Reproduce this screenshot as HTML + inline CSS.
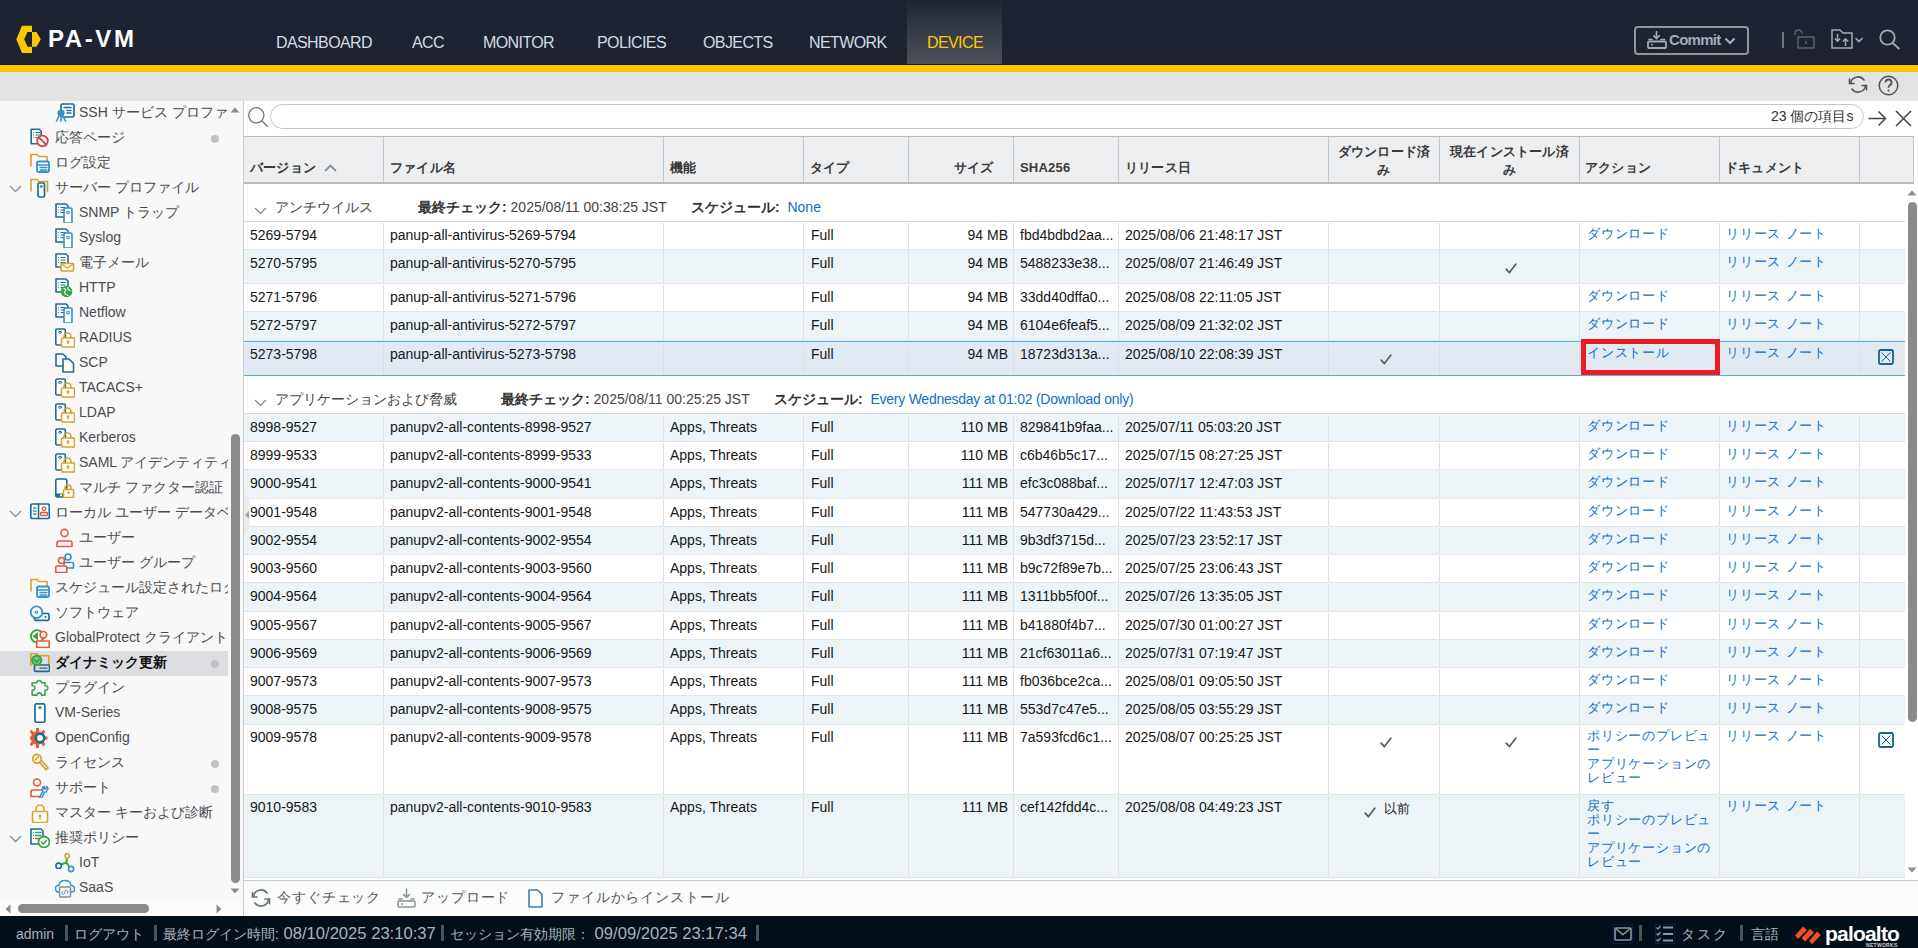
<!DOCTYPE html>
<html><head><meta charset="utf-8"><style>
*{box-sizing:border-box;margin:0;padding:0}
html,body{width:1918px;height:948px;overflow:hidden;background:#fff;font-family:"Liberation Sans",sans-serif;color:#222}
.abs{position:absolute}
#hdr{position:absolute;left:0;top:0;width:1918px;height:64px;background:#1d2330}
#hline{position:absolute;left:0;top:64px;width:1918px;height:1px;background:#0d1628}
#yel{position:absolute;left:0;top:65px;width:1918px;height:7px;background:#fdc800}
#tbar{position:absolute;left:0;top:72px;width:1918px;height:29px;background:#e2e3e5}
.nav{position:absolute;top:33px;font-size:16px;color:#d3dbe4;line-height:20px;letter-spacing:-0.6px;white-space:nowrap}
#devtab{position:absolute;left:907px;top:0;width:95px;height:64px;background:linear-gradient(#1f2531,#4b525d)}
#side{position:absolute;left:0;top:101px;width:244px;height:815px;background:#f8f8f8;border-right:1px solid #c9cbcd;overflow:hidden}
#sidelist{position:absolute;left:0;top:0;width:228px;height:800px;overflow:hidden}
.si{position:absolute;height:25px;left:0;width:228px;font-size:14px;line-height:24px;color:#474c52;white-space:nowrap;overflow:hidden}
.si.sel{background:#dcdde0;font-weight:bold;color:#111}
.si .t{position:absolute;top:-1px;margin-left:-1px}
.dot{position:absolute;left:211px;width:8px;height:8px;border-radius:50%;background:#c2c2c2}
#foot{position:absolute;left:0;top:916px;width:1918px;height:32px;background:#030f18;color:#a9b3bd;font-size:14px;white-space:nowrap}
#main{position:absolute;left:244px;top:101px;width:1674px;height:815px;background:#fff;overflow:hidden}
.row{position:absolute;left:0;width:1661px;border-bottom:1px solid #e3e6e8;font-size:14px;color:#161616;white-space:nowrap}
.row.sel{border-top:1px solid #5aaee0;border-bottom:1px solid #5aaee0;background:linear-gradient(#dfebf4,#e3e8f2)!important}
.vl{position:absolute;top:1px;bottom:0;width:1px;background:#dedfe1}
.c{position:absolute;top:3px;line-height:18px}
.c.r{left:auto}
.lk,.act{color:#0f6fc6}
.act{position:absolute;top:4px;line-height:14px;font-size:13px;letter-spacing:.8px}
.chk{position:absolute;top:12px;line-height:0}
.xb{position:absolute;top:7px;line-height:0}
#thead{position:absolute;left:0;top:35px;width:1670px;height:48px;background:#eceeef;border-top:1px solid #b9bdc1;border-bottom:2px solid #b9bdc1}
.th{position:absolute;top:23px;font-size:13px;font-weight:bold;color:#3a3a3a;letter-spacing:0.2px;line-height:16px;white-space:nowrap}
.th2{position:absolute;top:6px;font-size:13px;font-weight:bold;color:#3a3a3a;letter-spacing:0.2px;line-height:18px;text-align:center;white-space:nowrap}
.grp{position:absolute;left:0;width:1661px;background:#fff;border-bottom:1px solid #d6d9dc}
.gt{position:absolute;top:14px;font-size:14px;color:#444;line-height:18px;white-space:nowrap}
.gt b{color:#333}
.hvl{position:absolute;top:0;bottom:0;width:1px;background:#c4c8cc}
.bt{position:absolute;top:786px;font-size:14px;color:#555;letter-spacing:0.9px;line-height:20px;white-space:nowrap}
.ft{position:absolute;top:9px;line-height:18px}
.fb{position:absolute;top:9px;width:3px;height:16px;background:#4a525b}
.fd{font-size:16.6px}
.in{position:absolute;left:0;right:0;height:0}

</style></head><body>
<div id="hdr">
  <div id="devtab"></div>
  <svg class="abs" style="left:16px;top:25px" width="26" height="29" viewBox="0 0 26 29"><polygon points="16,0.8 6,0.8 0.3,14.2 6,27.9 16,27.9 16,21.7 11.5,21.7 8.2,14.2 11.5,7 16,7" fill="#fdc800"/><polygon points="16,7 20.5,7 24.8,14.2 20.5,21.7 16,21.7" fill="#fdc800"/></svg>
  <div class="abs" style="left:48px;top:26px;font-size:24px;font-weight:bold;color:#fff;letter-spacing:2.6px;line-height:26px">PA-VM</div>
  <div class="nav" style="left:276px">DASHBOARD</div>
  <div class="nav" style="left:412px">ACC</div>
  <div class="nav" style="left:483px">MONITOR</div>
  <div class="nav" style="left:597px">POLICIES</div>
  <div class="nav" style="left:703px">OBJECTS</div>
  <div class="nav" style="left:809px">NETWORK</div>
  <div class="nav" style="left:927px;color:#fdc800">DEVICE</div>
  <div class="abs" style="left:1634px;top:26px;width:115px;height:29px;border:2px solid #8e969f;border-radius:4px"></div>
  <svg class="abs" style="left:1647px;top:31px" width="20" height="18" viewBox="0 0 20 18" fill="none" stroke="#a3abb4" stroke-linecap="round"><path d="M9.5 0.8v6.5M6.8 4.8l2.7 2.7 2.7-2.7" stroke-width="1.7"/><path d="M2 8.5h3M14 8.5h3.5" stroke-width="1.7"/><rect x="1" y="10.5" width="18" height="6.5" rx="1" stroke-width="1.8"/><circle cx="5" cy="13.8" r="1" fill="#a3abb4" stroke="none"/></svg>
  <div class="abs" style="left:1669px;top:31px;font-size:15px;font-weight:bold;color:#a3abb4;line-height:18px;letter-spacing:-0.7px">Commit</div>
  <svg class="abs" style="left:1724px;top:37px" width="12" height="8" viewBox="0 0 12 8"><path d="M1.5 1.5l4.5 4.5 4.5-4.5" stroke="#a3abb4" stroke-width="2.2" fill="none"/></svg>
  <div class="abs" style="left:1782px;top:32px;width:2px;height:16px;background:#6b737c"></div>
  <svg class="abs" style="left:1794px;top:29px" width="22" height="20" viewBox="0 0 22 20" fill="none" stroke="#5e666f" stroke-width="1.4"><path d="M1 6V4.5a3.5 3.5 0 0 1 7 0"/><rect x="4" y="8" width="16" height="11"/><path d="M12 12v3"/></svg>
  <svg class="abs" style="left:1831px;top:29px" width="34" height="20" viewBox="0 0 34 20" fill="none" stroke="#a3abb4" stroke-width="1.5"><path d="M1 1h8l3 3h9v15h-20z"/><path d="M6.5 5v7M3.8 9.5l2.7 2.7 2.7-2.7M14.5 17v-7M11.8 12.5l2.7-2.7 2.7 2.7"/><path d="M24.5 9l3.5 3.5 3.5-3.5" stroke-width="1.6"/></svg>
  <svg class="abs" style="left:1879px;top:29px" width="22" height="21" viewBox="0 0 22 21" fill="none" stroke="#a3abb4" stroke-width="1.8"><circle cx="8.5" cy="8.5" r="7.2"/><path d="M13.8 14l6.5 6"/></svg>
</div>
<div id="hline"></div>
<div id="yel"></div>
<div id="tbar">
  <svg class="abs" style="left:1848px;top:3px" width="20" height="19" viewBox="0 0 20 19" fill="none" stroke="#555" stroke-width="1.6" stroke-linecap="round"><path d="M2.5 8.5a7.5 7.5 0 0 1 13.5-3.5"/><path d="M17.5 10.5a7.5 7.5 0 0 1-13.5 3.5"/><path d="M1.5 4v4.5h4.5" /><path d="M18.5 15v-4.5h-4.5"/></svg>
  <svg class="abs" style="left:1878px;top:3px" width="22" height="21" viewBox="0 0 22 21" fill="none" stroke="#555"><circle cx="10.5" cy="10.5" r="9.3" stroke-width="1.5"/><path d="M7.5 7.5a3 3 0 1 1 4 2.8c-1 .5-1 1-1 2.5" stroke-width="1.9"/><circle cx="10.5" cy="15.5" r="1.1" fill="#555" stroke="none"/></svg>
</div>
<div id="side"><div id="sidelist">
<div class="si" style="top:0px"><div class="abs" style="left:55px;top:2px;line-height:0"><svg width="20" height="20" viewBox="0 0 20 20" fill="none" stroke-linejoin="round" stroke-linecap="round"><rect x="6" y="1" width="13" height="13" rx="1.5" stroke="#1e6b99" stroke-width="1.7" fill="#fff"/><path d="M9 4.5h7M12 7.5h4M12 10h4" stroke="#1e6b99" stroke-width="1.3"/><circle cx="6" cy="10" r="3.6" fill="#2f93cc"/><path d="M4 13l-2.5 5M6 13.5v4.5M8 13l2.5 5" stroke="#2f93cc" stroke-width="1.6"/></svg></div><div class="t" style="left:80px">SSH サービス プロファイル</div></div>
<div class="si" style="top:25px"><div class="abs" style="left:30px;top:2px;line-height:0"><svg width="20" height="20" viewBox="0 0 20 20" fill="none" stroke-linejoin="round" stroke-linecap="round"><path d="M1.2 1.2h8l2 2v12.5h-10z" stroke="#1e6b99" stroke-width="1.6" fill="#fff"/><path d="M5.5 4.5h5M5.5 7h5M5.5 9.5h5M3 4.5h.8M3 7h.8M3 9.5h.8" stroke="#1e6b99" stroke-width="1.2" stroke-linecap="butt"/><circle cx="12.5" cy="13" r="5.3" stroke="#cf4646" stroke-width="1.8" fill="#fff"/><path d="M9 9.5l7 7" stroke="#cf4646" stroke-width="1.8"/></svg></div><div class="t" style="left:56px">応答ページ</div></div><div class="dot" style="top:34px"></div>
<div class="si" style="top:50px"><div class="abs" style="left:30px;top:2px;line-height:0"><svg width="20" height="20" viewBox="0 0 20 20" fill="none" stroke-linejoin="round" stroke-linecap="round"><path d="M1 13V1.5h6l2 2h8v5" stroke="#d9a22b" stroke-width="1.6"/><rect x="7" y="8.5" width="12" height="10.5" rx="1.5" stroke="#2f93cc" stroke-width="1.8" fill="#fff"/><path d="M7 12h12M10 14.5h7M10 17h7" stroke="#2f93cc" stroke-width="1.3"/></svg></div><div class="t" style="left:56px">ログ設定</div></div>
<div class="si" style="top:75px"><div class="abs" style="left:9px;top:9px;line-height:0"><svg width="13" height="8" viewBox="0 0 13 8"><path d="M1 1l5.5 5.5L12 1" stroke="#8a9096" stroke-width="1.3" fill="none"/></svg></div><div class="abs" style="left:30px;top:2px;line-height:0"><svg width="20" height="20" viewBox="0 0 20 20" fill="none" stroke-linejoin="round" stroke-linecap="round"><path d="M1 13V1.5h6l2 2h8.5v10" stroke="#d9a22b" stroke-width="1.6"/><rect x="8" y="5" width="6.5" height="14" rx="1.2" stroke="#1e6b99" stroke-width="1.7" fill="#fff"/><circle cx="11.2" cy="8.5" r="1" stroke="#1e6b99" stroke-width="1"/></svg></div><div class="t" style="left:56px">サーバー プロファイル</div></div>
<div class="si" style="top:100px"><div class="abs" style="left:55px;top:2px;line-height:0"><svg width="20" height="20" viewBox="0 0 20 20" fill="none" stroke-linejoin="round" stroke-linecap="round"><path d="M1 1h10l2 2v11h-12z" stroke="#1e6b99" stroke-width="1.6" fill="#fff"/><path d="M5.5 4.5h5M5.5 7h5M5.5 9.5h5M3 4.5h.8M3 7h.8M3 9.5h.8" stroke="#1e6b99" stroke-width="1.2" stroke-linecap="butt"/><rect x="9" y="5" width="8" height="15" rx="1.3" stroke="#2f93cc" stroke-width="1.6" fill="#fff"/><circle cx="13" cy="9.5" r="1.3" stroke="#2f93cc" stroke-width="1.1"/></svg></div><div class="t" style="left:80px">SNMP トラップ</div></div>
<div class="si" style="top:125px"><div class="abs" style="left:55px;top:2px;line-height:0"><svg width="20" height="20" viewBox="0 0 20 20" fill="none" stroke-linejoin="round" stroke-linecap="round"><path d="M1 1h10l2 2v11h-12z" stroke="#1e6b99" stroke-width="1.6" fill="#fff"/><path d="M5.5 4.5h5M5.5 7h5M5.5 9.5h5M3 4.5h.8M3 7h.8M3 9.5h.8" stroke="#1e6b99" stroke-width="1.2" stroke-linecap="butt"/><rect x="9" y="5" width="8" height="15" rx="1.3" stroke="#2f93cc" stroke-width="1.6" fill="#fff"/><circle cx="13" cy="9.5" r="1.3" stroke="#2f93cc" stroke-width="1.1"/></svg></div><div class="t" style="left:80px">Syslog</div></div>
<div class="si" style="top:150px"><div class="abs" style="left:55px;top:2px;line-height:0"><svg width="20" height="20" viewBox="0 0 20 20" fill="none" stroke-linejoin="round" stroke-linecap="round"><path d="M1 1h10l2 2v11h-12z" stroke="#1e6b99" stroke-width="1.6" fill="#fff"/><path d="M5.5 4.5h5M5.5 7h5M5.5 9.5h5M3 4.5h.8M3 7h.8M3 9.5h.8" stroke="#1e6b99" stroke-width="1.2" stroke-linecap="butt"/><rect x="6" y="10.5" width="12.5" height="7.5" rx="1" stroke="#d9a22b" stroke-width="1.6" fill="#fff"/><path d="M6.5 11l6 4 6-4" stroke="#d9a22b" stroke-width="1.4"/></svg></div><div class="t" style="left:80px">電子メール</div></div>
<div class="si" style="top:175px"><div class="abs" style="left:55px;top:2px;line-height:0"><svg width="20" height="20" viewBox="0 0 20 20" fill="none" stroke-linejoin="round" stroke-linecap="round"><path d="M1 1h10l2 2v11h-12z" stroke="#1e6b99" stroke-width="1.6" fill="#fff"/><path d="M5.5 4.5h5M5.5 7h5M5.5 9.5h5M3 4.5h.8M3 7h.8M3 9.5h.8" stroke="#1e6b99" stroke-width="1.2" stroke-linecap="butt"/><circle cx="11.5" cy="13.5" r="5.8" fill="#3aa548"/><path d="M9 10.5q3 1 1 3t3 4M13 9.5q-1 2 2 3" stroke="#fff" stroke-width="1.1"/></svg></div><div class="t" style="left:80px">HTTP</div></div>
<div class="si" style="top:200px"><div class="abs" style="left:55px;top:2px;line-height:0"><svg width="20" height="20" viewBox="0 0 20 20" fill="none" stroke-linejoin="round" stroke-linecap="round"><path d="M1 1h10l2 2v11h-12z" stroke="#1e6b99" stroke-width="1.6" fill="#fff"/><path d="M5.5 4.5h5M5.5 7h5M5.5 9.5h5M3 4.5h.8M3 7h.8M3 9.5h.8" stroke="#1e6b99" stroke-width="1.2" stroke-linecap="butt"/><rect x="9" y="5" width="8" height="15" rx="1.3" stroke="#2f93cc" stroke-width="1.6" fill="#fff"/><circle cx="13" cy="9.5" r="1.3" stroke="#2f93cc" stroke-width="1.1"/></svg></div><div class="t" style="left:80px">Netflow</div></div>
<div class="si" style="top:225px"><div class="abs" style="left:55px;top:2px;line-height:0"><svg width="20" height="20" viewBox="0 0 20 20" fill="none" stroke-linejoin="round" stroke-linecap="round"><rect x="0.8" y="1" width="9.5" height="16" rx="1.3" stroke="#1e6b99" stroke-width="1.6" fill="#fff"/><ellipse cx="5" cy="4.3" rx="1.5" ry="1" stroke="#1e6b99" stroke-width="1"/><path d="M9 10V8.5a3.5 3.5 0 0 1 7 0V10" stroke="#d9a22b" stroke-width="1.6"/><rect x="6.5" y="10" width="13" height="9" rx="1" stroke="#d9a22b" stroke-width="1.6" fill="#fff"/><circle cx="13" cy="13.7" r="1.4" fill="#d9a22b"/><path d="M13 14v2" stroke="#d9a22b" stroke-width="1.2"/></svg></div><div class="t" style="left:80px">RADIUS</div></div>
<div class="si" style="top:250px"><div class="abs" style="left:55px;top:2px;line-height:0"><svg width="20" height="20" viewBox="0 0 20 20" fill="none" stroke-linejoin="round" stroke-linecap="round"><path d="M1 1h7l3 3v9h-10z" stroke="#1e6b99" stroke-width="1.6" fill="#fff"/><path d="M8 6h6l4.5 4.5v8.5h-10.5z" stroke="#1e6b99" stroke-width="1.6" fill="#fff"/></svg></div><div class="t" style="left:80px">SCP</div></div>
<div class="si" style="top:275px"><div class="abs" style="left:55px;top:2px;line-height:0"><svg width="20" height="20" viewBox="0 0 20 20" fill="none" stroke-linejoin="round" stroke-linecap="round"><rect x="0.8" y="1" width="9.5" height="16" rx="1.3" stroke="#1e6b99" stroke-width="1.6" fill="#fff"/><ellipse cx="5" cy="4.3" rx="1.5" ry="1" stroke="#1e6b99" stroke-width="1"/><path d="M9 10V8.5a3.5 3.5 0 0 1 7 0V10" stroke="#d9a22b" stroke-width="1.6"/><rect x="6.5" y="10" width="13" height="9" rx="1" stroke="#d9a22b" stroke-width="1.6" fill="#fff"/><circle cx="13" cy="13.7" r="1.4" fill="#d9a22b"/><path d="M13 14v2" stroke="#d9a22b" stroke-width="1.2"/></svg></div><div class="t" style="left:80px">TACACS+</div></div>
<div class="si" style="top:300px"><div class="abs" style="left:55px;top:2px;line-height:0"><svg width="20" height="20" viewBox="0 0 20 20" fill="none" stroke-linejoin="round" stroke-linecap="round"><rect x="0.8" y="1" width="9.5" height="16" rx="1.3" stroke="#1e6b99" stroke-width="1.6" fill="#fff"/><ellipse cx="5" cy="4.3" rx="1.5" ry="1" stroke="#1e6b99" stroke-width="1"/><path d="M9 10V8.5a3.5 3.5 0 0 1 7 0V10" stroke="#d9a22b" stroke-width="1.6"/><rect x="6.5" y="10" width="13" height="9" rx="1" stroke="#d9a22b" stroke-width="1.6" fill="#fff"/><circle cx="13" cy="13.7" r="1.4" fill="#d9a22b"/><path d="M13 14v2" stroke="#d9a22b" stroke-width="1.2"/></svg></div><div class="t" style="left:80px">LDAP</div></div>
<div class="si" style="top:325px"><div class="abs" style="left:55px;top:2px;line-height:0"><svg width="20" height="20" viewBox="0 0 20 20" fill="none" stroke-linejoin="round" stroke-linecap="round"><rect x="0.8" y="1" width="9.5" height="16" rx="1.3" stroke="#1e6b99" stroke-width="1.6" fill="#fff"/><ellipse cx="5" cy="4.3" rx="1.5" ry="1" stroke="#1e6b99" stroke-width="1"/><path d="M9 10V8.5a3.5 3.5 0 0 1 7 0V10" stroke="#d9a22b" stroke-width="1.6"/><rect x="6.5" y="10" width="13" height="9" rx="1" stroke="#d9a22b" stroke-width="1.6" fill="#fff"/><circle cx="13" cy="13.7" r="1.4" fill="#d9a22b"/><path d="M13 14v2" stroke="#d9a22b" stroke-width="1.2"/></svg></div><div class="t" style="left:80px">Kerberos</div></div>
<div class="si" style="top:350px"><div class="abs" style="left:55px;top:2px;line-height:0"><svg width="20" height="20" viewBox="0 0 20 20" fill="none" stroke-linejoin="round" stroke-linecap="round"><rect x="0.8" y="1" width="9.5" height="16" rx="1.3" stroke="#1e6b99" stroke-width="1.6" fill="#fff"/><ellipse cx="5" cy="4.3" rx="1.5" ry="1" stroke="#1e6b99" stroke-width="1"/><path d="M9 10V8.5a3.5 3.5 0 0 1 7 0V10" stroke="#d9a22b" stroke-width="1.6"/><rect x="6.5" y="10" width="13" height="9" rx="1" stroke="#d9a22b" stroke-width="1.6" fill="#fff"/><circle cx="13" cy="13.7" r="1.4" fill="#d9a22b"/><path d="M13 14v2" stroke="#d9a22b" stroke-width="1.2"/></svg></div><div class="t" style="left:80px">SAML アイデンティティ プロバイダ</div></div>
<div class="si" style="top:375px"><div class="abs" style="left:55px;top:2px;line-height:0"><svg width="20" height="20" viewBox="0 0 20 20" fill="none" stroke-linejoin="round" stroke-linecap="round"><rect x="0.8" y="1" width="11" height="18" rx="1.5" stroke="#1e6b99" stroke-width="1.6" fill="#fff"/><rect x="0.8" y="15.5" width="11" height="3.5" fill="#1e6b99"/><rect x="5" y="16.3" width="2" height="2" fill="#fff"/><path d="M10 11.5V10a3 3 0 0 1 6 0v1.5" stroke="#d9a22b" stroke-width="1.6"/><rect x="8.5" y="11.5" width="10" height="8" rx="1" stroke="#d9a22b" stroke-width="1.6" fill="#fff"/><circle cx="13.5" cy="14.8" r="1.3" fill="#d9a22b"/></svg></div><div class="t" style="left:80px">マルチ ファクター認証</div></div>
<div class="si" style="top:400px"><div class="abs" style="left:9px;top:9px;line-height:0"><svg width="13" height="8" viewBox="0 0 13 8"><path d="M1 1l5.5 5.5L12 1" stroke="#8a9096" stroke-width="1.3" fill="none"/></svg></div><div class="abs" style="left:30px;top:2px;line-height:0"><svg width="20" height="20" viewBox="0 0 20 20" fill="none" stroke-linejoin="round" stroke-linecap="round"><rect x="0.8" y="1" width="18.5" height="14.5" rx="1.5" stroke="#1e6b99" stroke-width="1.7" fill="#fff"/><path d="M8.5 1v14.5" stroke="#1e6b99" stroke-width="1.6"/><path d="M3.5 5h2.5M3.5 8h2.5M3.5 11h2.5" stroke="#2f93cc" stroke-width="1.3"/><circle cx="14" cy="5.7" r="1.8" stroke="#e85b35" stroke-width="1.3"/><rect x="10.5" y="9.5" width="7" height="3" rx=".5" stroke="#e85b35" stroke-width="1.3"/></svg></div><div class="t" style="left:56px">ローカル ユーザー データベース</div></div>
<div class="si" style="top:425px"><div class="abs" style="left:55px;top:2px;line-height:0"><svg width="20" height="20" viewBox="0 0 20 20" fill="none" stroke-linejoin="round" stroke-linecap="round"><circle cx="9.5" cy="5" r="3.6" stroke="#e85b35" stroke-width="1.6"/><path d="M2 18.5v-3.5q0-2 2-2h11q2 0 2 2v3.5z" stroke="#e85b35" stroke-width="1.6"/></svg></div><div class="t" style="left:80px">ユーザー</div></div>
<div class="si" style="top:450px"><div class="abs" style="left:55px;top:2px;line-height:0"><svg width="20" height="20" viewBox="0 0 20 20" fill="none" stroke-linejoin="round" stroke-linecap="round"><circle cx="13" cy="4" r="3" stroke="#2f93cc" stroke-width="1.6"/><path d="M9 12v-1q0-1.5 1.5-1.5h6.5q1.5 0 1.5 1.5v4h-7" stroke="#2f93cc" stroke-width="1.6"/><circle cx="6.5" cy="7.5" r="3" stroke="#e85b35" stroke-width="1.6"/><path d="M0.8 19.5v-5q0-1.5 1.5-1.5h8q1.5 0 1.5 1.5v5z" stroke="#e85b35" stroke-width="1.6"/></svg></div><div class="t" style="left:80px">ユーザー グループ</div></div>
<div class="si" style="top:475px"><div class="abs" style="left:30px;top:2px;line-height:0"><svg width="20" height="20" viewBox="0 0 20 20" fill="none" stroke-linejoin="round" stroke-linecap="round"><path d="M1 13V1.5h6l2 2h8v5" stroke="#d9a22b" stroke-width="1.6"/><rect x="7" y="8.5" width="12" height="10.5" rx="1.5" stroke="#2f93cc" stroke-width="1.8" fill="#fff"/><path d="M7 12h12M10 14.5h7M10 17h7" stroke="#2f93cc" stroke-width="1.3"/></svg></div><div class="t" style="left:56px">スケジュール設定されたログのエクスポート</div></div>
<div class="si" style="top:500px"><div class="abs" style="left:30px;top:2px;line-height:0"><svg width="20" height="20" viewBox="0 0 20 20" fill="none" stroke-linejoin="round" stroke-linecap="round"><rect x="4.5" y="10.5" width="14.5" height="6.8" rx="1.2" stroke="#1e6b99" stroke-width="1.7" fill="#fff"/><circle cx="15.5" cy="14" r="1" fill="#1e6b99"/><circle cx="6.5" cy="9.2" r="5.8" stroke="#2f93cc" stroke-width="1.8" fill="#fff"/><circle cx="6.5" cy="9.2" r="1.2" stroke="#2f93cc" stroke-width="1.1"/></svg></div><div class="t" style="left:56px">ソフトウェア</div></div>
<div class="si" style="top:525px"><div class="abs" style="left:30px;top:2px;line-height:0"><svg width="20" height="20" viewBox="0 0 20 20" fill="none" stroke-linejoin="round" stroke-linecap="round"><circle cx="7.2" cy="8.3" r="6.2" stroke="#3aa548" stroke-width="1.9" fill="#f8f8f8"/><path d="M2.5 8.3l5.5-4.2v8.4z" fill="#3aa548"/><path d="M6.8 19.6V13h12.4v6.6z" stroke="#e85b35" stroke-width="1.7" fill="#f8f8f8"/><circle cx="13.4" cy="6.8" r="3.3" stroke="#e85b35" stroke-width="1.7" fill="#f8f8f8"/></svg></div><div class="t" style="left:56px">GlobalProtect クライアント</div></div>
<div class="si sel" style="top:550px"><div class="abs" style="left:30px;top:2px;line-height:0"><svg width="20" height="20" viewBox="0 0 20 20" fill="none" stroke-linejoin="round" stroke-linecap="round"><path d="M0.8 12.5V0.8h6l2 2h10v10" stroke="#d9a22b" stroke-width="1.6"/><rect x="4.5" y="12" width="15" height="6.4" rx="1.2" stroke="#1e6b99" stroke-width="1.7" fill="#dcdde0"/><path d="M10 15.2h7" stroke="#1e6b99" stroke-width="1.3"/><circle cx="6.7" cy="7.3" r="5.6" fill="#3aa548"/><circle cx="6.7" cy="7.3" r="3.6" fill="#7cc487"/><path d="M4.3 6.5l2.4 2.8 2.4-2.8" stroke="#3aa548" stroke-width="1.6" fill="none"/></svg></div><div class="t" style="left:56px">ダイナミック更新</div></div><div class="dot" style="top:559px"></div>
<div class="si" style="top:575px"><div class="abs" style="left:30px;top:2px;line-height:0"><svg width="20" height="20" viewBox="0 0 20 20" fill="none" stroke-linejoin="round" stroke-linecap="round"><path d="M1 6.5H6.3A2.4 2.4 0 1 1 11.1 6.5H15V10A2.4 2.4 0 1 1 15 14.6V20H11.1A2.4 2.4 0 1 0 6.3 20H1V14.6A2.4 2.4 0 1 0 1 10Z" transform="translate(1.2 -1.3) scale(.92)" stroke="#3aa548" stroke-width="1.7"/></svg></div><div class="t" style="left:56px">プラグイン</div></div>
<div class="si" style="top:600px"><div class="abs" style="left:30px;top:2px;line-height:0"><svg width="20" height="20" viewBox="0 0 20 20" fill="none" stroke-linejoin="round" stroke-linecap="round"><rect x="5" y="0.8" width="9.8" height="18.6" rx="1.6" stroke="#1e6b99" stroke-width="1.7" fill="#fff"/><circle cx="10" cy="4.6" r="1.7" fill="#3aa548"/></svg></div><div class="t" style="left:56px">VM-Series</div></div>
<div class="si" style="top:625px"><div class="abs" style="left:30px;top:2px;line-height:0"><svg width="20" height="20" viewBox="0 0 20 20" fill="none" stroke-linejoin="round" stroke-linecap="round"><circle cx="7.5" cy="10" r="6.8" fill="#e85b35"/><rect x="6" y="0" width="3" height="4" transform="rotate(0 7.5 10)" fill="#e85b35"/><rect x="6" y="0" width="3" height="4" transform="rotate(45 7.5 10)" fill="#e85b35"/><rect x="6" y="0" width="3" height="4" transform="rotate(90 7.5 10)" fill="#e85b35"/><rect x="6" y="0" width="3" height="4" transform="rotate(135 7.5 10)" fill="#e85b35"/><rect x="6" y="0" width="3" height="4" transform="rotate(180 7.5 10)" fill="#e85b35"/><rect x="6" y="0" width="3" height="4" transform="rotate(225 7.5 10)" fill="#e85b35"/><rect x="6" y="0" width="3" height="4" transform="rotate(270 7.5 10)" fill="#e85b35"/><rect x="6" y="0" width="3" height="4" transform="rotate(315 7.5 10)" fill="#e85b35"/><circle cx="10" cy="10" r="4.2" fill="#fff" stroke="#1e6b99" stroke-width="2.6"/><circle cx="10" cy="10" r="1.8" fill="#fff"/></svg></div><div class="t" style="left:56px">OpenConfig</div></div>
<div class="si" style="top:650px"><div class="abs" style="left:30px;top:2px;line-height:0"><svg width="20" height="20" viewBox="0 0 20 20" fill="none" stroke-linejoin="round" stroke-linecap="round"><circle cx="7" cy="5.8" r="4.3" stroke="#d9a22b" stroke-width="1.8"/><path d="M9.6 9.2l6.4 7.6 2-1.7-6.2-7.4" stroke="#d9a22b" stroke-width="1.7"/><path d="M5.5 7q.5-2.5 3-3" stroke="#d9a22b" stroke-width="1.6"/></svg></div><div class="t" style="left:56px">ライセンス</div></div><div class="dot" style="top:659px"></div>
<div class="si" style="top:675px"><div class="abs" style="left:30px;top:2px;line-height:0"><svg width="20" height="20" viewBox="0 0 20 20" fill="none" stroke-linejoin="round" stroke-linecap="round"><circle cx="7" cy="4.5" r="3.5" stroke="#e85b35" stroke-width="1.6"/><path d="M1 18.5v-5q0-1.5 1.5-1.5h9" stroke="#e85b35" stroke-width="1.6"/><path d="M1 18.5h8" stroke="#e85b35" stroke-width="1.6"/><path d="M17 8.5l-1.5 2.5h-1.5l.5-2.5-1.5.3-1 3 1 .8-3.5 7 2 1 3-6.5h1.5l2-3.5z" stroke="#2f93cc" stroke-width="1.5" fill="#fff"/></svg></div><div class="t" style="left:56px">サポート</div></div><div class="dot" style="top:684px"></div>
<div class="si" style="top:700px"><div class="abs" style="left:30px;top:2px;line-height:0"><svg width="20" height="20" viewBox="0 0 20 20" fill="none" stroke-linejoin="round" stroke-linecap="round"><path d="M6 8.5V6a4 4 0 0 1 8 0v2.5" stroke="#d9a22b" stroke-width="1.6"/><rect x="2.5" y="8.5" width="15" height="11" rx="1.2" stroke="#d9a22b" stroke-width="1.6" fill="#fff"/><circle cx="10" cy="13" r="1.5" fill="#d9a22b"/><path d="M10 13.5v2.5" stroke="#d9a22b" stroke-width="1.3"/></svg></div><div class="t" style="left:56px">マスター キーおよび診断</div></div>
<div class="si" style="top:725px"><div class="abs" style="left:9px;top:9px;line-height:0"><svg width="13" height="8" viewBox="0 0 13 8"><path d="M1 1l5.5 5.5L12 1" stroke="#8a9096" stroke-width="1.3" fill="none"/></svg></div><div class="abs" style="left:30px;top:2px;line-height:0"><svg width="20" height="20" viewBox="0 0 20 20" fill="none" stroke-linejoin="round" stroke-linecap="round"><path d="M1 1h10l2 2v13h-12z" stroke="#1e6b99" stroke-width="1.6" fill="#fff"/><path d="M5.5 4.5h5.5" stroke="#2f93cc" stroke-width="1.3"/><path d="M5.5 7.5h5.5" stroke="#3aa548" stroke-width="1.3"/><path d="M5.5 10.5h4" stroke="#cf4646" stroke-width="1.3"/><path d="M3 4.5h.8M3 7.5h.8M3 10.5h.8" stroke="#1e6b99" stroke-width="1.2" stroke-linecap="butt"/><circle cx="14" cy="14" r="5.5" stroke="#3aa548" stroke-width="1.8" fill="#fff"/><path d="M11.5 14l2 2 3-3.5" stroke="#3aa548" stroke-width="1.6"/></svg></div><div class="t" style="left:56px">推奨ポリシー</div></div>
<div class="si" style="top:750px"><div class="abs" style="left:55px;top:2px;line-height:0"><svg width="20" height="20" viewBox="0 0 20 20" fill="none" stroke-linejoin="round" stroke-linecap="round"><path d="M12 5.5L11.4 9.5L5.5 11.8M11.4 9.5L14.3 13.8" stroke="#3aa548" stroke-width="2"/><circle cx="12.2" cy="3" r="2.3" stroke="#d9a22b" stroke-width="1.5" fill="#f8f8f8"/><circle cx="3.6" cy="12.8" r="2.7" stroke="#1e6b99" stroke-width="1.6" fill="#f8f8f8"/><circle cx="16" cy="16" r="2.6" stroke="#2f93cc" stroke-width="1.6" fill="#f8f8f8"/></svg></div><div class="t" style="left:80px">IoT</div></div>
<div class="si" style="top:775px"><div class="abs" style="left:55px;top:2px;line-height:0"><svg width="20" height="20" viewBox="0 0 20 20" fill="none" stroke-linejoin="round" stroke-linecap="round"><path d="M4 14q-3.5 0-3.5-3.5t3.5-3q.5-5 6-5t6 5q3.5 0 3.5 3.5t-3.5 3" stroke="#2f93cc" stroke-width="1.4"/><rect x="4.5" y="9" width="11" height="10" rx="1" stroke="#8b8f94" stroke-width="1.5" fill="#f7f8f9"/><path d="M8 13.5l-1.5 1.5 1.5 1.5M12 12.5l1.5 1.5-1.5 1.5M9 16l2-4" stroke="#2f93cc" stroke-width="1"/></svg></div><div class="t" style="left:80px">SaaS</div></div>
</div>
<svg class="abs" style="left:229px;top:4px" width="12" height="9" viewBox="0 0 12 9"><path d="M1.5 7.5l4.5-5 4.5 5z" fill="#8a8d91"/></svg>
<div class="abs" style="left:231px;top:333px;width:9px;height:449px;background:#8a8a8a;border-radius:5px"></div>
<svg class="abs" style="left:229px;top:786px" width="12" height="9" viewBox="0 0 12 9"><path d="M1.5 1.5l4.5 5 4.5-5z" fill="#8a8d91"/></svg>
<div class="abs" style="left:0;top:800px;width:243px;height:15px;background:#fbfbfb"></div>
<svg class="abs" style="left:4px;top:802px" width="8" height="12" viewBox="0 0 8 12"><path d="M6.5 1.5l-5 4.5 5 4.5z" fill="#8a8d91"/></svg>
<div class="abs" style="left:18px;top:803px;width:131px;height:9px;background:#8a8a8a;border-radius:5px"></div>
<svg class="abs" style="left:215px;top:802px" width="8" height="12" viewBox="0 0 8 12"><path d="M1.5 1.5l5 4.5-5 4.5z" fill="#8a8d91"/></svg>
</div>
<div id="main">
<svg class="abs" style="left:4px;top:6px" width="21" height="21" viewBox="0 0 21 21" fill="none" stroke="#6f7479" stroke-width="1.3"><circle cx="8.3" cy="8.3" r="7.6"/><path d="M13.8 13.8l6 6"/></svg>
<div class="abs" style="left:26px;top:3px;width:1594px;height:25px;border:1px solid #c4c8cc;border-radius:13px"></div>
<div class="abs" style="left:1527px;top:7px;font-size:14px;color:#333;line-height:17px">23 個の項目s</div>
<svg class="abs" style="left:1624px;top:9px" width="19" height="17" viewBox="0 0 19 17" fill="none" stroke="#444" stroke-width="1.5"><path d="M0.5 8.5h17M10.5 1.5l7 7-7 7"/></svg>
<svg class="abs" style="left:1651px;top:9px" width="17" height="17" viewBox="0 0 17 17" fill="none" stroke="#444" stroke-width="1.5"><path d="M1 1l15 15M16 1l-15 15"/></svg>
<div id="thead"><div class="hvl" style="left:139px"></div><div class="hvl" style="left:419px"></div><div class="hvl" style="left:559px"></div><div class="hvl" style="left:664px"></div><div class="hvl" style="left:769px"></div><div class="hvl" style="left:874px"></div><div class="hvl" style="left:1084px"></div><div class="hvl" style="left:1195px"></div><div class="hvl" style="left:1335px"></div><div class="hvl" style="left:1475px"></div><div class="hvl" style="left:1615px"></div><div class="hvl" style="left:1669px"></div>
 <div class="th" style="left:6px">バージョン</div>
 <svg class="abs" style="left:80px;top:27px" width="13" height="8" viewBox="0 0 13 8"><path d="M1 7l5.5-5.5L12 7" stroke="#8c9196" stroke-width="1.8" fill="none"/></svg>
 <div class="th" style="left:146px">ファイル名</div>
 <div class="th" style="left:426px">機能</div>
 <div class="th" style="left:566px">タイプ</div>
 <div class="th" style="left:710px">サイズ</div>
 <div class="th" style="left:776px">SHA256</div>
 <div class="th" style="left:881px">リリース日</div>
 <div class="th2" style="left:1085px;width:110px">ダウンロード済<br>み</div>
 <div class="th2" style="left:1196px;width:139px">現在インストール済<br>み</div>
 <div class="th" style="left:1341px">アクション</div>
 <div class="th" style="left:1481px">ドキュメント</div>
</div>
<div class="grp" style="top:83px;height:38px">
 <svg class="abs" style="left:10px;top:23px" width="13" height="8" viewBox="0 0 13 8"><path d="M1 1l5.5 5.5L12 1" stroke="#8a9096" stroke-width="1.3" fill="none"/></svg>
 <div class="gt" style="left:31px">アンチウイルス</div>
 <div class="gt" style="left:174px"><b>最終チェック:</b> 2025/08/11 00:38:25 JST</div>
 <div class="gt" style="left:447px"><b>スケジュール:</b> &nbsp;<span class="lk">None</span></div>
</div>
<div class="grp" style="top:275.4px;height:38px">
 <svg class="abs" style="left:10px;top:23px" width="13" height="8" viewBox="0 0 13 8"><path d="M1 1l5.5 5.5L12 1" stroke="#8a9096" stroke-width="1.3" fill="none"/></svg>
 <div class="gt" style="left:31px">アプリケーションおよび脅威</div>
 <div class="gt" style="left:257px"><b>最終チェック:</b> 2025/08/11 00:25:25 JST</div>
 <div class="gt" style="left:530px"><b>スケジュール:</b> &nbsp;<span class="lk" style="letter-spacing:-0.25px">Every Wednesday at 01:02 (Download only)</span></div>
</div>
<div class="row" style="top:121.00px;height:27.60px;background:#ffffff"><div class="vl" style="left:139px"></div><div class="vl" style="left:419px"></div><div class="vl" style="left:559px"></div><div class="vl" style="left:664px"></div><div class="vl" style="left:769px"></div><div class="vl" style="left:874px"></div><div class="vl" style="left:1084px"></div><div class="vl" style="left:1195px"></div><div class="vl" style="left:1335px"></div><div class="vl" style="left:1475px"></div><div class="vl" style="left:1615px"></div><div class="in" style="top:0.5px"><div class="c" style="left:6px">5269-5794</div><div class="c" style="left:146px">panup-all-antivirus-5269-5794</div><div class="c" style="left:567px">Full</div><div class="c r" style="right:897px">94 MB</div><div class="c" style="left:776px">fbd4bdbd2aa...</div><div class="c" style="left:881px">2025/08/06 21:48:17 JST</div><div class="act" style="left:1343px"><div>ダウンロード</div></div><div class="act" style="left:1482px">リリース ノート</div></div></div>
<div class="row" style="top:148.60px;height:34.70px;background:#ecf4f7"><div class="vl" style="left:139px"></div><div class="vl" style="left:419px"></div><div class="vl" style="left:559px"></div><div class="vl" style="left:664px"></div><div class="vl" style="left:769px"></div><div class="vl" style="left:874px"></div><div class="vl" style="left:1084px"></div><div class="vl" style="left:1195px"></div><div class="vl" style="left:1335px"></div><div class="vl" style="left:1475px"></div><div class="vl" style="left:1615px"></div><div class="in" style="top:1px"><div class="c" style="left:6px">5270-5795</div><div class="c" style="left:146px">panup-all-antivirus-5270-5795</div><div class="c" style="left:567px">Full</div><div class="c r" style="right:897px">94 MB</div><div class="c" style="left:776px">5488233e38...</div><div class="c" style="left:881px">2025/08/07 21:46:49 JST</div><div class="chk" style="left:1261px"><svg width="12" height="11" viewBox="0 0 12 11"><path d="M1.2 6.2l3.2 3.4L10.8 1.2" stroke="#5b5b5b" stroke-width="1.7" fill="none" stroke-linecap="round" stroke-linejoin="round"/></svg></div><div class="act" style="left:1482px">リリース ノート</div></div></div>
<div class="row" style="top:183.30px;height:28.10px;background:#ffffff"><div class="vl" style="left:139px"></div><div class="vl" style="left:419px"></div><div class="vl" style="left:559px"></div><div class="vl" style="left:664px"></div><div class="vl" style="left:769px"></div><div class="vl" style="left:874px"></div><div class="vl" style="left:1084px"></div><div class="vl" style="left:1195px"></div><div class="vl" style="left:1335px"></div><div class="vl" style="left:1475px"></div><div class="vl" style="left:1615px"></div><div class="in" style="top:1px"><div class="c" style="left:6px">5271-5796</div><div class="c" style="left:146px">panup-all-antivirus-5271-5796</div><div class="c" style="left:567px">Full</div><div class="c r" style="right:897px">94 MB</div><div class="c" style="left:776px">33dd40dffa0...</div><div class="c" style="left:881px">2025/08/08 22:11:05 JST</div><div class="act" style="left:1343px"><div>ダウンロード</div></div><div class="act" style="left:1482px">リリース ノート</div></div></div>
<div class="row" style="top:211.40px;height:28.60px;background:#ecf4f7"><div class="vl" style="left:139px"></div><div class="vl" style="left:419px"></div><div class="vl" style="left:559px"></div><div class="vl" style="left:664px"></div><div class="vl" style="left:769px"></div><div class="vl" style="left:874px"></div><div class="vl" style="left:1084px"></div><div class="vl" style="left:1195px"></div><div class="vl" style="left:1335px"></div><div class="vl" style="left:1475px"></div><div class="vl" style="left:1615px"></div><div class="in" style="top:1px"><div class="c" style="left:6px">5272-5797</div><div class="c" style="left:146px">panup-all-antivirus-5272-5797</div><div class="c" style="left:567px">Full</div><div class="c r" style="right:897px">94 MB</div><div class="c" style="left:776px">6104e6feaf5...</div><div class="c" style="left:881px">2025/08/09 21:32:02 JST</div><div class="act" style="left:1343px"><div>ダウンロード</div></div><div class="act" style="left:1482px">リリース ノート</div></div></div>
<div class="row sel" style="top:240.00px;height:35.00px;background:#ffffff"><div class="vl" style="left:139px"></div><div class="vl" style="left:419px"></div><div class="vl" style="left:559px"></div><div class="vl" style="left:664px"></div><div class="vl" style="left:769px"></div><div class="vl" style="left:874px"></div><div class="vl" style="left:1084px"></div><div class="vl" style="left:1195px"></div><div class="vl" style="left:1335px"></div><div class="vl" style="left:1475px"></div><div class="vl" style="left:1615px"></div><div class="in" style="top:0.3px"><div class="c" style="left:6px">5273-5798</div><div class="c" style="left:146px">panup-all-antivirus-5273-5798</div><div class="c" style="left:567px">Full</div><div class="c r" style="right:897px">94 MB</div><div class="c" style="left:776px">18723d313a...</div><div class="c" style="left:881px">2025/08/10 22:08:39 JST</div><div class="chk" style="left:1136px"><svg width="12" height="11" viewBox="0 0 12 11"><path d="M1.2 6.2l3.2 3.4L10.8 1.2" stroke="#5b5b5b" stroke-width="1.7" fill="none" stroke-linecap="round" stroke-linejoin="round"/></svg></div><div class="act" style="left:1343px"><div>インストール</div></div><div class="act" style="left:1482px">リリース ノート</div><div class="xb" style="left:1634px"><svg width="16" height="16" viewBox="0 0 16 16"><rect x="1" y="1" width="14" height="14" rx="1.5" stroke="#15648f" stroke-width="1.8" fill="none"/><path d="M3.5 3.5l9 9M12.5 3.5l-9 9" stroke="#15648f" stroke-width="1"/></svg></div></div></div>
<div class="row" style="top:313.00px;height:28.24px;background:#ecf4f7"><div class="vl" style="left:139px"></div><div class="vl" style="left:419px"></div><div class="vl" style="left:559px"></div><div class="vl" style="left:664px"></div><div class="vl" style="left:769px"></div><div class="vl" style="left:874px"></div><div class="vl" style="left:1084px"></div><div class="vl" style="left:1195px"></div><div class="vl" style="left:1335px"></div><div class="vl" style="left:1475px"></div><div class="vl" style="left:1615px"></div><div class="in" style="top:1px"><div class="c" style="left:6px">8998-9527</div><div class="c" style="left:146px">panupv2-all-contents-8998-9527</div><div class="c" style="left:426px">Apps, Threats</div><div class="c" style="left:567px">Full</div><div class="c r" style="right:897px">110 MB</div><div class="c" style="left:776px">829841b9faa...</div><div class="c" style="left:881px">2025/07/11 05:03:20 JST</div><div class="act" style="left:1343px"><div>ダウンロード</div></div><div class="act" style="left:1482px">リリース ノート</div></div></div>
<div class="row" style="top:341.24px;height:28.24px;background:#ffffff"><div class="vl" style="left:139px"></div><div class="vl" style="left:419px"></div><div class="vl" style="left:559px"></div><div class="vl" style="left:664px"></div><div class="vl" style="left:769px"></div><div class="vl" style="left:874px"></div><div class="vl" style="left:1084px"></div><div class="vl" style="left:1195px"></div><div class="vl" style="left:1335px"></div><div class="vl" style="left:1475px"></div><div class="vl" style="left:1615px"></div><div class="in" style="top:1px"><div class="c" style="left:6px">8999-9533</div><div class="c" style="left:146px">panupv2-all-contents-8999-9533</div><div class="c" style="left:426px">Apps, Threats</div><div class="c" style="left:567px">Full</div><div class="c r" style="right:897px">110 MB</div><div class="c" style="left:776px">c6b46b5c17...</div><div class="c" style="left:881px">2025/07/15 08:27:25 JST</div><div class="act" style="left:1343px"><div>ダウンロード</div></div><div class="act" style="left:1482px">リリース ノート</div></div></div>
<div class="row" style="top:369.48px;height:28.24px;background:#ecf4f7"><div class="vl" style="left:139px"></div><div class="vl" style="left:419px"></div><div class="vl" style="left:559px"></div><div class="vl" style="left:664px"></div><div class="vl" style="left:769px"></div><div class="vl" style="left:874px"></div><div class="vl" style="left:1084px"></div><div class="vl" style="left:1195px"></div><div class="vl" style="left:1335px"></div><div class="vl" style="left:1475px"></div><div class="vl" style="left:1615px"></div><div class="in" style="top:1px"><div class="c" style="left:6px">9000-9541</div><div class="c" style="left:146px">panupv2-all-contents-9000-9541</div><div class="c" style="left:426px">Apps, Threats</div><div class="c" style="left:567px">Full</div><div class="c r" style="right:897px">111 MB</div><div class="c" style="left:776px">efc3c088baf...</div><div class="c" style="left:881px">2025/07/17 12:47:03 JST</div><div class="act" style="left:1343px"><div>ダウンロード</div></div><div class="act" style="left:1482px">リリース ノート</div></div></div>
<div class="row" style="top:397.72px;height:28.24px;background:#ffffff"><div class="vl" style="left:139px"></div><div class="vl" style="left:419px"></div><div class="vl" style="left:559px"></div><div class="vl" style="left:664px"></div><div class="vl" style="left:769px"></div><div class="vl" style="left:874px"></div><div class="vl" style="left:1084px"></div><div class="vl" style="left:1195px"></div><div class="vl" style="left:1335px"></div><div class="vl" style="left:1475px"></div><div class="vl" style="left:1615px"></div><div class="in" style="top:1px"><div class="c" style="left:6px">9001-9548</div><div class="c" style="left:146px">panupv2-all-contents-9001-9548</div><div class="c" style="left:426px">Apps, Threats</div><div class="c" style="left:567px">Full</div><div class="c r" style="right:897px">111 MB</div><div class="c" style="left:776px">547730a429...</div><div class="c" style="left:881px">2025/07/22 11:43:53 JST</div><div class="act" style="left:1343px"><div>ダウンロード</div></div><div class="act" style="left:1482px">リリース ノート</div></div></div>
<div class="row" style="top:425.96px;height:28.24px;background:#ecf4f7"><div class="vl" style="left:139px"></div><div class="vl" style="left:419px"></div><div class="vl" style="left:559px"></div><div class="vl" style="left:664px"></div><div class="vl" style="left:769px"></div><div class="vl" style="left:874px"></div><div class="vl" style="left:1084px"></div><div class="vl" style="left:1195px"></div><div class="vl" style="left:1335px"></div><div class="vl" style="left:1475px"></div><div class="vl" style="left:1615px"></div><div class="in" style="top:1px"><div class="c" style="left:6px">9002-9554</div><div class="c" style="left:146px">panupv2-all-contents-9002-9554</div><div class="c" style="left:426px">Apps, Threats</div><div class="c" style="left:567px">Full</div><div class="c r" style="right:897px">111 MB</div><div class="c" style="left:776px">9b3df3715d...</div><div class="c" style="left:881px">2025/07/23 23:52:17 JST</div><div class="act" style="left:1343px"><div>ダウンロード</div></div><div class="act" style="left:1482px">リリース ノート</div></div></div>
<div class="row" style="top:454.20px;height:28.24px;background:#ffffff"><div class="vl" style="left:139px"></div><div class="vl" style="left:419px"></div><div class="vl" style="left:559px"></div><div class="vl" style="left:664px"></div><div class="vl" style="left:769px"></div><div class="vl" style="left:874px"></div><div class="vl" style="left:1084px"></div><div class="vl" style="left:1195px"></div><div class="vl" style="left:1335px"></div><div class="vl" style="left:1475px"></div><div class="vl" style="left:1615px"></div><div class="in" style="top:1px"><div class="c" style="left:6px">9003-9560</div><div class="c" style="left:146px">panupv2-all-contents-9003-9560</div><div class="c" style="left:426px">Apps, Threats</div><div class="c" style="left:567px">Full</div><div class="c r" style="right:897px">111 MB</div><div class="c" style="left:776px">b9c72f89e7b...</div><div class="c" style="left:881px">2025/07/25 23:06:43 JST</div><div class="act" style="left:1343px"><div>ダウンロード</div></div><div class="act" style="left:1482px">リリース ノート</div></div></div>
<div class="row" style="top:482.44px;height:28.24px;background:#ecf4f7"><div class="vl" style="left:139px"></div><div class="vl" style="left:419px"></div><div class="vl" style="left:559px"></div><div class="vl" style="left:664px"></div><div class="vl" style="left:769px"></div><div class="vl" style="left:874px"></div><div class="vl" style="left:1084px"></div><div class="vl" style="left:1195px"></div><div class="vl" style="left:1335px"></div><div class="vl" style="left:1475px"></div><div class="vl" style="left:1615px"></div><div class="in" style="top:1px"><div class="c" style="left:6px">9004-9564</div><div class="c" style="left:146px">panupv2-all-contents-9004-9564</div><div class="c" style="left:426px">Apps, Threats</div><div class="c" style="left:567px">Full</div><div class="c r" style="right:897px">111 MB</div><div class="c" style="left:776px">1311bb5f00f...</div><div class="c" style="left:881px">2025/07/26 13:35:05 JST</div><div class="act" style="left:1343px"><div>ダウンロード</div></div><div class="act" style="left:1482px">リリース ノート</div></div></div>
<div class="row" style="top:510.68px;height:28.24px;background:#ffffff"><div class="vl" style="left:139px"></div><div class="vl" style="left:419px"></div><div class="vl" style="left:559px"></div><div class="vl" style="left:664px"></div><div class="vl" style="left:769px"></div><div class="vl" style="left:874px"></div><div class="vl" style="left:1084px"></div><div class="vl" style="left:1195px"></div><div class="vl" style="left:1335px"></div><div class="vl" style="left:1475px"></div><div class="vl" style="left:1615px"></div><div class="in" style="top:1px"><div class="c" style="left:6px">9005-9567</div><div class="c" style="left:146px">panupv2-all-contents-9005-9567</div><div class="c" style="left:426px">Apps, Threats</div><div class="c" style="left:567px">Full</div><div class="c r" style="right:897px">111 MB</div><div class="c" style="left:776px">b41880f4b7...</div><div class="c" style="left:881px">2025/07/30 01:00:27 JST</div><div class="act" style="left:1343px"><div>ダウンロード</div></div><div class="act" style="left:1482px">リリース ノート</div></div></div>
<div class="row" style="top:538.92px;height:28.24px;background:#ecf4f7"><div class="vl" style="left:139px"></div><div class="vl" style="left:419px"></div><div class="vl" style="left:559px"></div><div class="vl" style="left:664px"></div><div class="vl" style="left:769px"></div><div class="vl" style="left:874px"></div><div class="vl" style="left:1084px"></div><div class="vl" style="left:1195px"></div><div class="vl" style="left:1335px"></div><div class="vl" style="left:1475px"></div><div class="vl" style="left:1615px"></div><div class="in" style="top:1px"><div class="c" style="left:6px">9006-9569</div><div class="c" style="left:146px">panupv2-all-contents-9006-9569</div><div class="c" style="left:426px">Apps, Threats</div><div class="c" style="left:567px">Full</div><div class="c r" style="right:897px">111 MB</div><div class="c" style="left:776px">21cf63011a6...</div><div class="c" style="left:881px">2025/07/31 07:19:47 JST</div><div class="act" style="left:1343px"><div>ダウンロード</div></div><div class="act" style="left:1482px">リリース ノート</div></div></div>
<div class="row" style="top:567.16px;height:28.24px;background:#ffffff"><div class="vl" style="left:139px"></div><div class="vl" style="left:419px"></div><div class="vl" style="left:559px"></div><div class="vl" style="left:664px"></div><div class="vl" style="left:769px"></div><div class="vl" style="left:874px"></div><div class="vl" style="left:1084px"></div><div class="vl" style="left:1195px"></div><div class="vl" style="left:1335px"></div><div class="vl" style="left:1475px"></div><div class="vl" style="left:1615px"></div><div class="in" style="top:1px"><div class="c" style="left:6px">9007-9573</div><div class="c" style="left:146px">panupv2-all-contents-9007-9573</div><div class="c" style="left:426px">Apps, Threats</div><div class="c" style="left:567px">Full</div><div class="c r" style="right:897px">111 MB</div><div class="c" style="left:776px">fb036bce2ca...</div><div class="c" style="left:881px">2025/08/01 09:05:50 JST</div><div class="act" style="left:1343px"><div>ダウンロード</div></div><div class="act" style="left:1482px">リリース ノート</div></div></div>
<div class="row" style="top:595.40px;height:28.20px;background:#ecf4f7"><div class="vl" style="left:139px"></div><div class="vl" style="left:419px"></div><div class="vl" style="left:559px"></div><div class="vl" style="left:664px"></div><div class="vl" style="left:769px"></div><div class="vl" style="left:874px"></div><div class="vl" style="left:1084px"></div><div class="vl" style="left:1195px"></div><div class="vl" style="left:1335px"></div><div class="vl" style="left:1475px"></div><div class="vl" style="left:1615px"></div><div class="in" style="top:1px"><div class="c" style="left:6px">9008-9575</div><div class="c" style="left:146px">panupv2-all-contents-9008-9575</div><div class="c" style="left:426px">Apps, Threats</div><div class="c" style="left:567px">Full</div><div class="c r" style="right:897px">111 MB</div><div class="c" style="left:776px">553d7c47e5...</div><div class="c" style="left:881px">2025/08/05 03:55:29 JST</div><div class="act" style="left:1343px"><div>ダウンロード</div></div><div class="act" style="left:1482px">リリース ノート</div></div></div>
<div class="row" style="top:623.60px;height:70.40px;background:#ffffff"><div class="vl" style="left:139px"></div><div class="vl" style="left:419px"></div><div class="vl" style="left:559px"></div><div class="vl" style="left:664px"></div><div class="vl" style="left:769px"></div><div class="vl" style="left:874px"></div><div class="vl" style="left:1084px"></div><div class="vl" style="left:1195px"></div><div class="vl" style="left:1335px"></div><div class="vl" style="left:1475px"></div><div class="vl" style="left:1615px"></div><div class="in" style="top:0px"><div class="c" style="left:6px">9009-9578</div><div class="c" style="left:146px">panupv2-all-contents-9009-9578</div><div class="c" style="left:426px">Apps, Threats</div><div class="c" style="left:567px">Full</div><div class="c r" style="right:897px">111 MB</div><div class="c" style="left:776px">7a593fcd6c1...</div><div class="c" style="left:881px">2025/08/07 00:25:25 JST</div><div class="chk" style="left:1136px"><svg width="12" height="11" viewBox="0 0 12 11"><path d="M1.2 6.2l3.2 3.4L10.8 1.2" stroke="#5b5b5b" stroke-width="1.7" fill="none" stroke-linecap="round" stroke-linejoin="round"/></svg></div><div class="chk" style="left:1261px"><svg width="12" height="11" viewBox="0 0 12 11"><path d="M1.2 6.2l3.2 3.4L10.8 1.2" stroke="#5b5b5b" stroke-width="1.7" fill="none" stroke-linecap="round" stroke-linejoin="round"/></svg></div><div class="act" style="left:1343px"><div>ポリシーのプレビュ<br>ー</div><div>アプリケーションの<br>レビュー</div></div><div class="act" style="left:1482px">リリース ノート</div><div class="xb" style="left:1634px"><svg width="16" height="16" viewBox="0 0 16 16"><rect x="1" y="1" width="14" height="14" rx="1.5" stroke="#15648f" stroke-width="1.8" fill="none"/><path d="M3.5 3.5l9 9M12.5 3.5l-9 9" stroke="#15648f" stroke-width="1"/></svg></div></div></div>
<div class="row" style="top:694.00px;height:82.60px;background:#ecf4f7"><div class="vl" style="left:139px"></div><div class="vl" style="left:419px"></div><div class="vl" style="left:559px"></div><div class="vl" style="left:664px"></div><div class="vl" style="left:769px"></div><div class="vl" style="left:874px"></div><div class="vl" style="left:1084px"></div><div class="vl" style="left:1195px"></div><div class="vl" style="left:1335px"></div><div class="vl" style="left:1475px"></div><div class="vl" style="left:1615px"></div><div class="in" style="top:0px"><div class="c" style="left:6px">9010-9583</div><div class="c" style="left:146px">panupv2-all-contents-9010-9583</div><div class="c" style="left:426px">Apps, Threats</div><div class="c" style="left:567px">Full</div><div class="c r" style="right:897px">111 MB</div><div class="c" style="left:776px">cef142fdd4c...</div><div class="c" style="left:881px">2025/08/08 04:49:23 JST</div><div class="chk" style="left:1120px"><svg width="12" height="11" viewBox="0 0 12 11"><path d="M1.2 6.2l3.2 3.4L10.8 1.2" stroke="#5b5b5b" stroke-width="1.7" fill="none" stroke-linecap="round" stroke-linejoin="round"/></svg></div><div class="c" style="left:1140px;top:5px;font-size:13px;color:#222">以前</div><div class="act" style="left:1343px"><div>戻す</div><div>ポリシーのプレビュ<br>ー</div><div>アプリケーションの<br>レビュー</div></div><div class="act" style="left:1482px">リリース ノート</div></div></div>
<div class="abs" style="left:1337px;top:238px;width:139px;height:36px;border:5px solid #ec1c24"></div>
<div class="abs" style="left:0;top:779px;width:1674px;height:36px;background:#fafbfb;border-top:1px solid #c9ccd0"></div>
<svg class="abs" style="left:7px;top:787px" width="20" height="20" viewBox="0 0 20 20" fill="none" stroke="#6d7277" stroke-width="1.7" stroke-linecap="round"><path d="M2.5 9a7.5 7.5 0 0 1 13.5-4"/><path d="M17.5 11a7.5 7.5 0 0 1-13.5 4"/><path d="M1.5 4.5v4.5h4.5"/><path d="M18.5 15.5v-4.5h-4.5"/></svg>
<div class="bt" style="left:33px">今すぐチェック</div>
<svg class="abs" style="left:153px;top:787px" width="19" height="20" viewBox="0 0 19 20" fill="none" stroke="#8c9196" stroke-width="1.5" stroke-linecap="round"><path d="M9.5 1v8M6.5 6.5l3 3 3-3M2 11h3M14 11h3"/><rect x="1" y="13" width="17" height="6" rx="1"/><circle cx="5" cy="16" r=".9" fill="#8c9196" stroke="none"/></svg>
<div class="bt" style="left:177px">アップロード</div>
<svg class="abs" style="left:284px;top:788px" width="15" height="19" viewBox="0 0 15 19" fill="none" stroke="#3a82ad" stroke-width="1.6" stroke-linejoin="round"><path d="M1 1h8.5l4.5 4.5v12.5h-13z"/></svg>
<div class="bt" style="left:307px">ファイルからインストール</div>
<svg class="abs" style="left:0;top:391px" width="6" height="44" viewBox="0 0 6 44"><polygon points="0,0 5.5,7 5.5,37 0,44" fill="#ececee"/><path d="M5 19v8l-4-4z" fill="#a3a6aa"/></svg>
<svg class="abs" style="left:1662px;top:87px" width="12" height="9" viewBox="0 0 12 9"><path d="M1.5 7.5l4.5-5 4.5 5z" fill="#8a8d91"/></svg>
<div class="abs" style="left:1664px;top:101px;width:9px;height:520px;background:#8a8a8a;border-radius:5px"></div>
<svg class="abs" style="left:1662px;top:765px" width="12" height="9" viewBox="0 0 12 9"><path d="M1.5 1.5l4.5 5 4.5-5z" fill="#8a8d91"/></svg>
</div>
<div id="foot">
 <div class="ft" style="left:16px">admin</div>
 <div class="fb" style="left:65px"></div>
 <div class="ft" style="left:74px">ログアウト</div>
 <div class="fb" style="left:154px"></div>
 <div class="ft" style="left:163px">最終ログイン時間:<span class="fd"> 08/10/2025 23:10:37</span></div>
 <div class="fb" style="left:441px"></div>
 <div class="ft" style="left:450px">セッション有効期限：<span class="fd"> 09/09/2025 23:17:34</span></div>
 <div class="fb" style="left:756px"></div>
 <svg class="abs" style="left:1613px;top:8px" width="20" height="20" viewBox="0 0 20 20" fill="none"><rect x="0.5" y="0.5" width="19" height="19" stroke="#0d1a4a" stroke-width="1"/><rect x="2" y="4" width="16" height="12" rx="1" stroke="#8e969f" stroke-width="1.6"/><path d="M2.5 4.5l7.5 6 7.5-6" stroke="#8e969f" stroke-width="1.6"/></svg>
 <div class="fb" style="left:1639px"></div>
 <svg class="abs" style="left:1655px;top:8px" width="20" height="20" viewBox="0 0 20 20" fill="none"><rect x="0.5" y="0.5" width="19" height="19" stroke="#0d1a4a" stroke-width="1"/><path d="M1.5 3.5l1.5 1.5 2.5-3M1.5 9.5l1.5 1.5 2.5-3M1.5 15.5l1.5 1.5 2.5-3" stroke="#8e969f" stroke-width="1.3"/><path d="M8 3.5h10M8 10h10M8 16.5h10" stroke="#8e969f" stroke-width="1.8"/></svg>
 <div class="ft" style="left:1681px;letter-spacing:2px">タスク</div>
 <div class="fb" style="left:1740px"></div>
 <div class="ft" style="left:1751px">言語</div>
 <svg class="abs" style="left:1795px;top:9px" width="27" height="19" viewBox="0 0 27 19"><path d="M8 1.5l4 3.5-9 9-3-3.5z M15 4l4 3.5-9 9-3.5-3.5z M22 6.5l4 3.5-9 9-3-3z" fill="#f04e23"/></svg>
 <div class="abs" style="left:1825px;top:7px;font-size:21px;font-weight:bold;color:#fff;line-height:22px;letter-spacing:-0.8px">paloalto</div>
 <div class="abs" style="left:1866px;top:27px;font-size:5px;font-weight:bold;color:#d0d0d0;line-height:5px;letter-spacing:.3px">NETWORKS</div>
</div>

</body></html>
